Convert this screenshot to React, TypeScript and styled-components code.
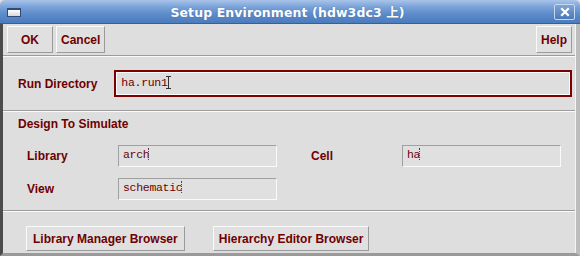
import React from "react";
import styled, { createGlobalStyle } from "styled-components";

const Global = createGlobalStyle`
  * { box-sizing: border-box; }
  html, body { margin: 0; padding: 0; background: #dedede; }
  body { font-family: "Liberation Sans", Arial, sans-serif; }
`;

const Window = styled.div`
  width: 580px;
  height: 256px;
  display: flex;
  flex-direction: column;
  background: #dedede;
  overflow: hidden;
`;

const TitleBar = styled.div`
  height: 24px;
  flex: none;
  display: flex;
  align-items: center;
  padding: 0 5px 0 7px;
  border-radius: 5px 5px 0 0;
  background: linear-gradient(#a9c4ea 0%, #7aa3d8 30%, #5d8cca 60%, #4a7bbd 100%);
  border-bottom: 1px solid #3a5f95;
`;

const MenuIcon = styled.div`
  width: 14px;
  height: 9px;
  flex: none;
  background: linear-gradient(#ffffff, #d8d8d8);
  border: 1px solid #2e4a78;
  border-top-width: 2px;
  margin-top: 2px;
`;

const Title = styled.div`
  flex: 1;
  text-align: center;
  color: #ffffff;
  font-family: "DejaVu Sans", "Noto Sans CJK SC", sans-serif;
  font-weight: bold;
  font-size: 12.5px;
  letter-spacing: 0.1px;
  text-shadow: 0 0 1px rgba(40, 70, 120, 0.5);
`;

const CloseBtn = styled.div`
  width: 21px;
  height: 16px;
  flex: none;
  margin-top: 1px;
  display: flex;
  align-items: center;
  justify-content: center;
  border: 1px solid #c6d8f0;
  border-radius: 2px;
  background: linear-gradient(#7fa4d6, #4b79b8);
`;

const Frame = styled.div`
  flex: 1;
  display: flex;
  flex-direction: column;
  border-left: 3px solid #4c4c4c;
  border-right: 4px solid #bdbdbd;
  border-bottom: 3px solid #9a9a9a;
  box-shadow: inset -1px 0 0 #f4f4f4;
`;

const Toolbar = styled.div`
  display: flex;
  gap: 3px;
  padding: 2px 4px 0 4px;
  height: 31px;
  flex: none;
`;

const Spacer = styled.div`
  flex: 1;
`;

const Btn = styled.button<{ $w?: number; $pad?: number; $h?: number }>`
  height: ${(p) => p.$h ?? 27}px;
  min-width: ${(p) => (p.$w ? `${p.$w}px` : "auto")};
  padding: 0 ${(p) => p.$pad ?? 4}px;
  background: #e0e0e0;
  border: 1px solid;
  border-color: #fafafa #9a9a9a #9a9a9a #fafafa;
  color: #6e0000;
  font-family: "Liberation Sans", Arial, sans-serif;
  font-weight: bold;
  font-size: 12px;
  cursor: default;
`;

const Divider = styled.div`
  height: 2px;
  flex: none;
  border-top: 1px solid #9c9c9c;
  border-bottom: 1px solid #fbfbfb;
  margin-right: 1px;
`;

const RunRow = styled.div`
  display: flex;
  align-items: center;
  height: 53px;
  flex: none;
  padding: 0 4px 0 15px;
  gap: 17px;
`;

const Label = styled.div`
  color: #6e0000;
  font-weight: bold;
  font-size: 12px;
  flex: none;
`;

const RunInput = styled.div`
  flex: 1;
  height: 27px;
  border: 2px solid #7c0000;
  box-shadow: inset 1px 1px 0 #ffffff, inset -1px -1px 0 #ffffff;
  background: #dedede;
  display: flex;
  align-items: center;
  padding: 0 4px 3px 5px;
`;

const FieldText = styled.span`
  font-family: "Liberation Mono", "Courier New", monospace;
  font-size: 11.5px;
  color: #6e0000;
  letter-spacing: -0.3px;
`;

const Caret = styled.span`
  display: inline-block;
  width: 1px;
  height: 13px;
  background: #333;
  vertical-align: middle;
  position: relative;
  &::before, &::after {
    content: "";
    position: absolute;
    left: -2px;
    width: 5px;
    height: 1px;
    background: #333;
  }
  &::before { top: 0; }
  &::after { bottom: 0; }
`;

const DotCaret = styled.span`
  display: inline-block;
  width: 1px;
  height: 12px;
  vertical-align: middle;
  border-left: 1px dotted #7c3030;
  margin-left: -1px;
`;

const SectionTitle = styled.div`
  color: #6e0000;
  font-weight: bold;
  font-size: 12px;
  padding: 5px 0 0 15px;
  height: 24px;
  flex: none;
`;

const Grid = styled.div`
  display: grid;
  grid-template-columns: 91px 159px 34px 91px 159px;
  grid-auto-rows: 22px;
  row-gap: 11px;
  align-items: center;
  padding: 9px 0 0 24px;
  height: 74px;
  flex: none;
`;

const Field = styled.div`
  height: 22px;
  border: 1px solid;
  border-color: #a0a0a0 #fafafa #fafafa #a0a0a0;
  background: #e0e0e0;
  display: flex;
  align-items: center;
  padding: 0 4px 4px 4px;
`;

const Gap = styled.div``;

const BottomRow = styled.div`
  display: flex;
  gap: 28px;
  padding: 14px 0 0 23px;
`;

const App: React.FC = () => (
  <Window>
    <Global />
    <TitleBar>
      <MenuIcon />
      <Title>Setup Environment (hdw3dc3 上)</Title>
      <CloseBtn>
        <svg width="10" height="10" viewBox="0 0 10 10">
          <path d="M2 2 L8 8 M8 2 L2 8" stroke="#ffffff" strokeWidth="2.2" strokeLinecap="square" />
        </svg>
      </CloseBtn>
    </TitleBar>
    <Frame>
      <Toolbar>
        <Btn $w={46}>OK</Btn>
        <Btn $w={46}>Cancel</Btn>
        <Spacer />
        <Btn $w={35}>Help</Btn>
      </Toolbar>
      <Divider />
      <RunRow>
        <Label>Run Directory</Label>
        <RunInput>
          <FieldText>ha.run1</FieldText>
          <Caret />
        </RunInput>
      </RunRow>
      <Divider />
      <SectionTitle>Design To Simulate</SectionTitle>
      <Grid>
        <Label>Library</Label>
        <Field>
          <FieldText>arch</FieldText>
          <DotCaret />
        </Field>
        <Gap />
        <Label>Cell</Label>
        <Field>
          <FieldText>ha</FieldText>
          <DotCaret />
        </Field>
        <Label>View</Label>
        <Field>
          <FieldText>schematic</FieldText>
          <DotCaret />
        </Field>
      </Grid>
      <Divider />
      <BottomRow>
        <Btn $pad={6} $h={25}>Library Manager Browser</Btn>
        <Btn $pad={5} $h={25}>Hierarchy Editor Browser</Btn>
      </BottomRow>
    </Frame>
  </Window>
);

export default App;
